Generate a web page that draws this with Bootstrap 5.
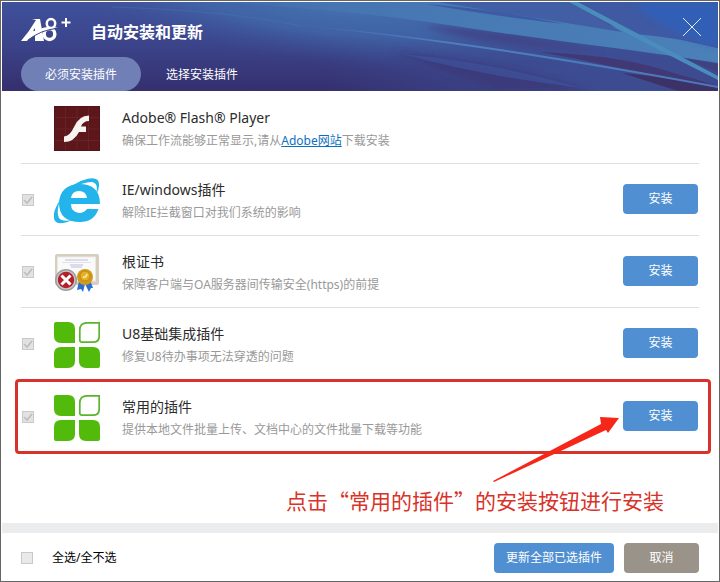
<!DOCTYPE html>
<html lang="zh-CN">
<head>
<meta charset="utf-8">
<meta name="viewport" content="width=device-width, initial-scale=1">
<title>自动安装和更新</title>
<link href="https://cdn.jsdelivr.net/npm/bootstrap@5.3.0/dist/css/bootstrap.min.css" rel="stylesheet">
<style>
  body { font-family: "Noto Sans", "Noto Sans CJK SC", sans-serif; font-size: 12px; line-height: 18px; color: #2c2c2c; }
  .app-window { border: 1px solid #666; padding: 1px; }
  .app-header { background: #3a3a80; }
  .header-art { position: absolute; inset: 0; width: 100%; height: 100%; }
  .title-bar { padding: 13px 15px 10px 19px; height: 55px; }
  .app-title { font-size: 16px; line-height: 24px; margin: 5px 0 0 18px; }
  .close-btn { width: 22px; height: 22px; }
  .tab-strip { padding-left: 19px; gap: 1px; }
  .tab-strip .nav-link { width: 120px; height: 34px; padding: 9px 0 7px; border-radius: 17px; color: #fff; text-align: center; }
  .tab-strip .nav-link.active { background: #7080b6; color: #fff; }
  .plugin-list { padding: 1px 7px 0 13px; }
  .plugin-row { height: 72px; margin: 0 12px 0 6px; padding: 0 1px 2px; border-bottom: 1px solid #e0e0e0; }
  .plugin-row.before-marked { height: 71px; border-bottom: 0; }
  .plugin-row.marked { height: 75px; margin: 0; padding: 0 10px 2px 4px; border: 3px solid #d8332a; border-radius: 4px; }
  .tick { appearance: none; width: 12px; height: 12px; margin: 0; border: 1px solid #c9c9c9; background: #e9e9e9; flex: none; }
  .tick:checked { background: #e2e2e2 url("data:image/svg+xml,%3Csvg xmlns='http://www.w3.org/2000/svg' viewBox='0 0 10 10'%3E%3Cpath d='M1 5l3 3 5-6' fill='none' stroke='%23bdbdbd' stroke-width='1.6'/%3E%3C/svg%3E") center / 10px; }
  .plugin-row .tick { margin-top: 2px; }
  .tick-slot { width: 12px; flex: none; }
  .plugin-icon { width: 46px; height: 46px; margin: 4px 22px 0 20px; flex: none; }
  .plugin-name { font-size: 14px; line-height: 22px; display: block; }
  .plugin-text { padding-top: 7px; }
  .plugin-note { line-height: 24px; margin: 0; color: #999; }
  .plugin-note a { color: #0b6fc0; }
  .action-btn { font-size: 12px; line-height: 18px; height: 30px; min-width: 75px; padding: 6px 12px; border: 0; border-radius: 4px; color: #fff; background: #5090d2; flex: none; }
  .action-btn:hover { color: #fff; background: #4280c2; }
  .action-btn.cancel { background: #99938a; }
  .pointer-arrow { position: absolute; right: 88px; top: 34px; width: 128px; height: 68px; pointer-events: none; }
  .callout-note { font-family: "Noto Sans CJK SC", sans-serif; font-size: 21px; line-height: 32px; color: #d8332a; padding: 30px 47px 4px 0; margin: 0; }
  .app-footer { border-top: 10px solid #ebecee; padding: 10px 19px 7px; gap: 10px; }
  .footer-label { margin-left: 9px; color: #000; }
</style>
<script defer src="https://cdn.jsdelivr.net/npm/bootstrap@5.3.0/dist/js/bootstrap.bundle.min.js"></script>
</head>
<body>
<svg width="0" height="0" class="position-absolute" aria-hidden="true">
  <symbol id="leaf-grid" viewBox="0 0 46 46">
    <path d="M2 0H14Q21 0 21 7V21H7Q0 21 0 14V2Q0 0 2 0Z M7 25H21V39Q21 46 14 46H2Q0 46 0 44V32Q0 25 7 25Z M25 25H39Q46 25 46 32V44Q46 46 44 46H32Q25 46 25 39Z" fill="#52ba0a"/>
    <path d="M45.200.800V14Q45.200 20.200 39 20.200H28Q25.800 20.200 25.800 18V8Q25.800.800 33 .800Z" fill="#fff" stroke="#5ab52c" stroke-width="1.700"/>
  </symbol>
</svg>
<div class="app-window d-flex flex-column min-vh-100 bg-white">
  <header class="app-header position-relative text-white">
    <svg class="header-art" viewBox="0 0 716 89" preserveAspectRatio="none" aria-hidden="true">
      <defs>
        <linearGradient id="base" x1="0" y1="0" x2="0" y2="1">
          <stop offset="0" stop-color="#3f519c"/><stop offset=".5" stop-color="#3b4389"/><stop offset="1" stop-color="#352f6e"/>
        </linearGradient>
        <radialGradient id="haze" gradientUnits="userSpaceOnUse" cx="0" cy="0" r="1" gradientTransform="translate(330 0) rotate(6) scale(300 62)">
          <stop offset="0" stop-color="#4472b0"/><stop offset=".5" stop-color="#416aab" stop-opacity=".75"/><stop offset="1" stop-color="#3d5096" stop-opacity="0"/>
        </radialGradient>
        <linearGradient id="right" x1="0" y1="0" x2="1" y2="0">
          <stop offset=".45" stop-color="#3e5298" stop-opacity="0"/><stop offset=".8" stop-color="#3e5298" stop-opacity=".8"/><stop offset="1" stop-color="#3e4a90"/>
        </linearGradient>
        <linearGradient id="glow" x1="0" y1="0" x2="1" y2="0">
          <stop offset="0" stop-color="#4778b3" stop-opacity="0"/><stop offset=".4" stop-color="#4778b3"/><stop offset="1" stop-color="#4b80b8"/>
        </linearGradient>
        <linearGradient id="streak" x1="0" y1="0" x2="1" y2="0">
          <stop offset="0" stop-color="#4f82c0" stop-opacity="0"/><stop offset=".4" stop-color="#4f7fbe"/><stop offset="1" stop-color="#4a78b8"/>
        </linearGradient>
        <filter id="soft" x="-10%" y="-20%" width="120%" height="140%"><feGaussianBlur stdDeviation="3"/></filter>
      </defs>
      <rect width="716" height="89" fill="url(#base)"/>
      <rect width="716" height="89" fill="url(#right)"/>
      <rect width="716" height="89" fill="url(#haze)"/>
      <path d="M420 24Q520 26 600 50Q500 50 420 24Z" fill="#40468a" filter="url(#soft)"/>
      <path d="M390 50Q500 62 590 89H490Q450 70 390 50Z" fill="#3b3a7c" filter="url(#soft)"/>
      <path d="M200 0H436Q500 9 560 15Q640 28 716 46V61Q680 55 620 47Q530 36 440 22Q330 6 200 0Z" fill="url(#glow)"/>
      <path d="M436 0H568L620 30Q520 14 436 0Z" fill="#425ea4"/>
      <path d="M577 0H716V46Q680 36 634 32Z" fill="#3f59a3"/>
      <path d="M630 0H716V44Q670 36 630 0Z" fill="#315fb6" filter="url(#soft)"/>
      <path d="M424 2Q500 8 562 22Q490 14 424 2Z" fill="#3d5ba4"/>
      <path d="M538 50Q610 53 655 66L716 84V89H700Q620 64 538 50Z" fill="#413876"/>
      <path d="M620 71Q660 74 716 87V89H676Z" fill="#3d3267"/>
      <path d="M684 57L716 62V70Z" fill="#40417f"/>
      <path d="M400 52Q490 60 580 86Q480 74 400 52Z" fill="#3f57a0" opacity=".6"/>
      <path d="M280 22Q450 34 716 84V86Q450 37 280 22Z" fill="url(#streak)"/>
      <path d="M567 0H576Q640 34 716 74V78Q640 40 567 0Z" fill="#4a8dbd"/>
      <path d="M110 5Q220 8 300 24" fill="none" stroke="#4a73ad" stroke-width=".8" opacity=".6"/>
    </svg>
    <div class="title-bar position-relative d-flex align-items-start">
      <svg width="52" height="28" viewBox="0 0 52 28" role="img" aria-label="A8+">
        <path d="M0 26Q8 17 15 5L11 4H19L23 26H14L14 20Q9 21 6 26ZM12 16H14L14 13Z" fill="#fff" fill-rule="evenodd"/>
        <ellipse cx="30" cy="8.500" rx="4.200" ry="4.500" fill="none" stroke="#fff" stroke-width="2.500"/>
        <ellipse cx="28.500" cy="19" rx="5.300" ry="5.500" fill="none" stroke="#fff" stroke-width="3.500"/>
        <path d="M4 22Q18 10 37 12.500Q20 14 7 25Z" fill="#fff"/>
        <path d="M7 25Q20 15 35 13.500" fill="none" stroke="#3f488d" stroke-width="1"/>
        <path d="M45 3V12M40.500 7.500H49.500" stroke="#fff" stroke-width="2"/>
      </svg>
      <h1 class="app-title fw-bold">自动安装和更新</h1>
      <button type="button" class="close-btn btn p-0 border-0 ms-auto d-flex align-items-center justify-content-center" aria-label="关闭">
        <svg width="22" height="22" viewBox="0 0 22 22"><path d="M2 3L20 21M20 3L2 21" stroke="#e4ebf7" stroke-width="1"/></svg>
      </button>
    </div>
    <nav class="tab-strip nav position-relative">
      <a class="nav-link active" href="#required" aria-current="page">必须安装插件</a>
      <a class="nav-link" href="#optional">选择安装插件</a>
    </nav>
  </header>

  <main class="plugin-list flex-grow-1" id="required">
    <section class="plugin-row d-flex align-items-center">
      <span class="tick-slot"></span>
      <svg class="plugin-icon" viewBox="0 0 46 46" aria-hidden="true">
        <rect width="46" height="45" fill="#5d171b"/>
        <path d="M11.500 0V45M23 0V45M34.500 0V45M0 11.500H46M0 23H46M0 34.500H46" stroke="#6b272b" stroke-width=".7"/>
        <rect x=".5" y=".5" width="45" height="44" fill="none" stroke="#4b1519"/>
        <path d="M35 9.500V15Q29 15 27 20.500H32V26H25Q20 36 10 36V30.500Q16 30 20 21Q25 9.500 35 9.500Z" fill="#f7f3f1"/>
      </svg>
      <div class="plugin-text flex-grow-1">
        <span class="plugin-name">Adobe® Flash® Player</span>
        <p class="plugin-note">确保工作流能够正常显示,请从<a href="#adobe">Adobe网站</a>下载安装</p>
      </div>
    </section>

    <section class="plugin-row d-flex align-items-center">
      <input class="tick" type="checkbox" id="plugin-ie" checked disabled>
      <svg class="plugin-icon" viewBox="0 0 46 46" aria-hidden="true">
        <path d="M46 26H17Q17 34 25 35Q30 35 33 31H44.500Q40 44 26 44Q5 44 5 25Q6 7 25 6Q46 6 46 26ZM17 20H33Q32 13 25 13Q18 13 17 20Z" fill="#22b4ea" fill-rule="evenodd"/>
        <path d="M8 19Q18 4 33 1Q46-2 45 8Q45 12 42 16Q45 5 38 4Q24 4 8 19Z" fill="#22b4ea"/>
        <path d="M6 22Q-3 36 1 43Q5 48 18 42Q8 44 5 40Q2 35 6 22Z" fill="#22b4ea"/>
      </svg>
      <div class="plugin-text flex-grow-1">
        <label class="plugin-name" for="plugin-ie">IE/windows插件</label>
        <p class="plugin-note">解除IE拦截窗口对我们系统的影响</p>
      </div>
      <button type="button" class="action-btn btn">安装</button>
    </section>

    <section class="plugin-row d-flex align-items-center">
      <input class="tick" type="checkbox" id="plugin-cert" checked disabled>
      <svg class="plugin-icon" viewBox="0 0 46 46" aria-hidden="true">
        <rect x="1" y="4" width="44" height="31" rx="2" fill="#d8cec0"/>
        <rect x="3.500" y="7" width="38" height="24" fill="#fafafa" stroke="#ebe7e1"/>
        <path d="M11 10H34M16 15H29M17 17H28" stroke="#b9c0d8" stroke-width="1.200"/>
        <path d="M8 12.500H37" stroke="#dfe3ed"/>
        <path d="M25 31L23 40L27 39L29 42L31 34L35 42L37 38L39 38L36 30Z" fill="#2c6fd0"/>
        <circle cx="31" cy="27" r="8" fill="#d29a17"/>
        <circle cx="31" cy="26" r="5" fill="#e6b02c" stroke="#c28a12"/>
        <path d="M29 27Q32 28 33 24" fill="none" stroke="#fff1b0" stroke-width="1.500"/>
        <circle cx="12" cy="30" r="11" fill="#9e9e9e"/>
        <circle cx="12" cy="30" r="9.500" fill="#c8c8c8"/>
        <circle cx="12" cy="30" r="8.200" fill="#b3202b"/>
        <path d="M7.500 25.500L16.500 34.500M16.500 25.500L7.500 34.500" stroke="#fff" stroke-width="3"/>
      </svg>
      <div class="plugin-text flex-grow-1">
        <label class="plugin-name" for="plugin-cert">根证书</label>
        <p class="plugin-note">保障客户端与OA服务器间传输安全(https)的前提</p>
      </div>
      <button type="button" class="action-btn btn">安装</button>
    </section>

    <section class="plugin-row before-marked d-flex align-items-center">
      <input class="tick" type="checkbox" id="plugin-u8" checked disabled>
      <svg class="plugin-icon" aria-hidden="true"><use href="#leaf-grid"/></svg>
      <div class="plugin-text flex-grow-1">
        <label class="plugin-name" for="plugin-u8">U8基础集成插件</label>
        <p class="plugin-note">修复U8待办事项无法穿透的问题</p>
      </div>
      <button type="button" class="action-btn btn">安装</button>
    </section>

    <section class="plugin-row marked position-relative d-flex align-items-center">
      <input class="tick" type="checkbox" id="plugin-common" checked disabled>
      <svg class="plugin-icon" aria-hidden="true"><use href="#leaf-grid"/></svg>
      <div class="plugin-text flex-grow-1">
        <label class="plugin-name" for="plugin-common">常用的插件</label>
        <p class="plugin-note">提供本地文件批量上传、文档中心的文件批量下载等功能</p>
      </div>
      <button type="button" class="action-btn btn">安装</button>
      <svg class="pointer-arrow" viewBox="0 0 128 68" aria-hidden="true">
        <path d="M1 65L109 8L108 1L127 2L116 17L114 14L2 66Z" fill="#f62718"/>
      </svg>
    </section>

    <p class="callout-note text-end">点击“常用的插件”的安装按钮进行安装</p>
  </main>

  <footer class="app-footer d-flex align-items-center">
    <input class="tick" type="checkbox" id="select-all">
    <label class="footer-label me-auto" for="select-all">全选/全不选</label>
    <button type="button" class="action-btn btn">更新全部已选插件</button>
    <button type="button" class="action-btn cancel btn">取消</button>
  </footer>
</div>
</body>
</html>
